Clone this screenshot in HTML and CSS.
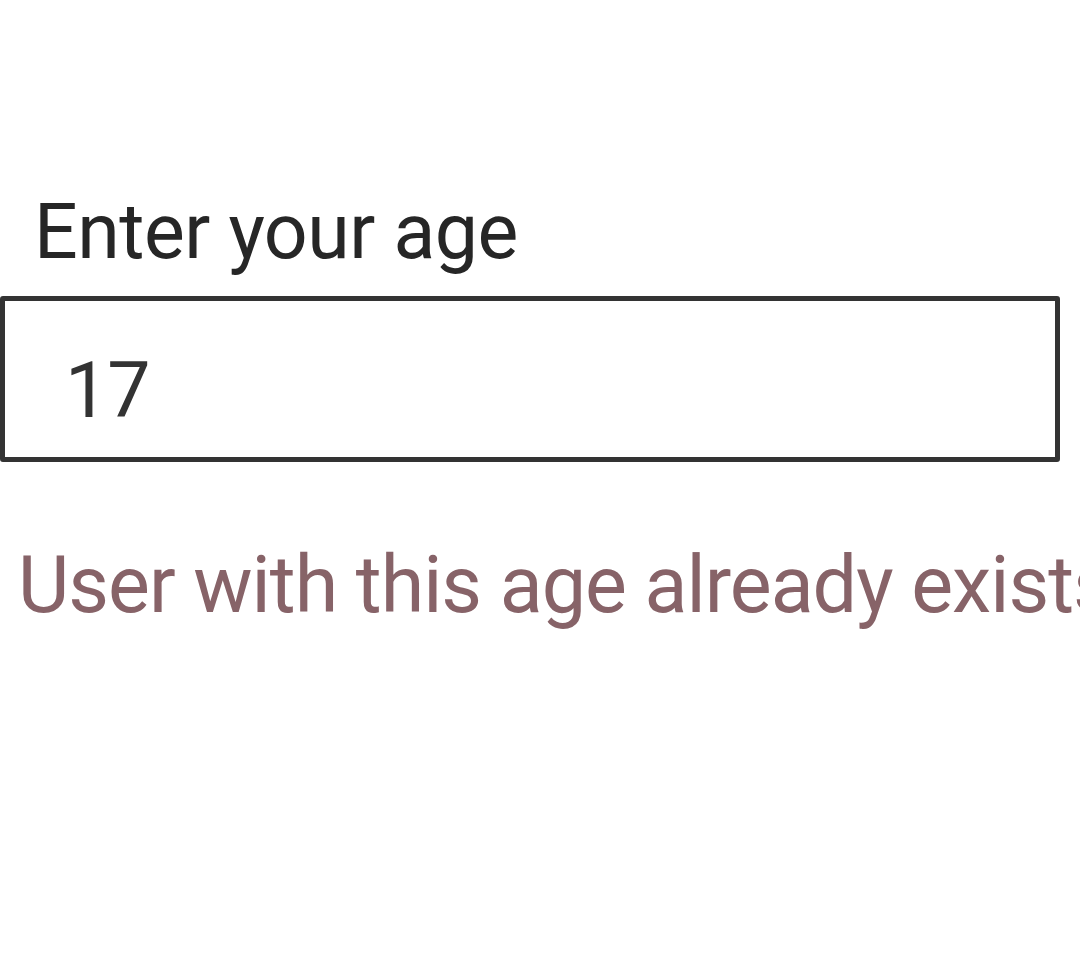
FILE: index.html
```html
<!DOCTYPE html>
<html lang="en">
<head>
<meta charset="utf-8">
<title>Enter your age</title>
<link rel="stylesheet" href="styles.css">
</head>
<body>
<main class="form">
  <label class="label" for="age">Enter your age</label>
  <input class="field" id="age" type="text" value="17" readonly>
  <p class="error">User with this age already exists</p>
</main>
</body>
</html>
```
FILE: styles.css
```css
html, body {
  margin: 0;
  padding: 0;
  background: #ffffff;
  overflow: hidden;
  width: 1080px;
  height: 960px;
}

.form {
  display: flex;
  flex-direction: column;
  align-items: flex-start;
  padding-top: 194px;
  font-family: Roboto, "Noto Sans", sans-serif;
  white-space: nowrap;
}

.label {
  font-size: 77px;
  line-height: 77px;
  color: #262626;
  padding-left: 34px;
  letter-spacing: -0.5px;
}

.field {
  margin: 25px 0 0 0;
  box-sizing: border-box;
  width: 1060px;
  height: 166px;
  border: 5px solid #333333;
  border-radius: 3px;
  padding: 51px 0 28px 60px;
  font-family: Roboto, "Noto Sans", sans-serif;
  font-size: 77px;
  line-height: 77px;
  letter-spacing: -1px;
  color: #333333;
  background: #ffffff;
  outline: none;
}

.error {
  margin: 84px 0 0 0;
  padding-left: 18px;
  font-size: 79px;
  line-height: 79px;
  letter-spacing: -1px;
  color: #876368;
}
```
